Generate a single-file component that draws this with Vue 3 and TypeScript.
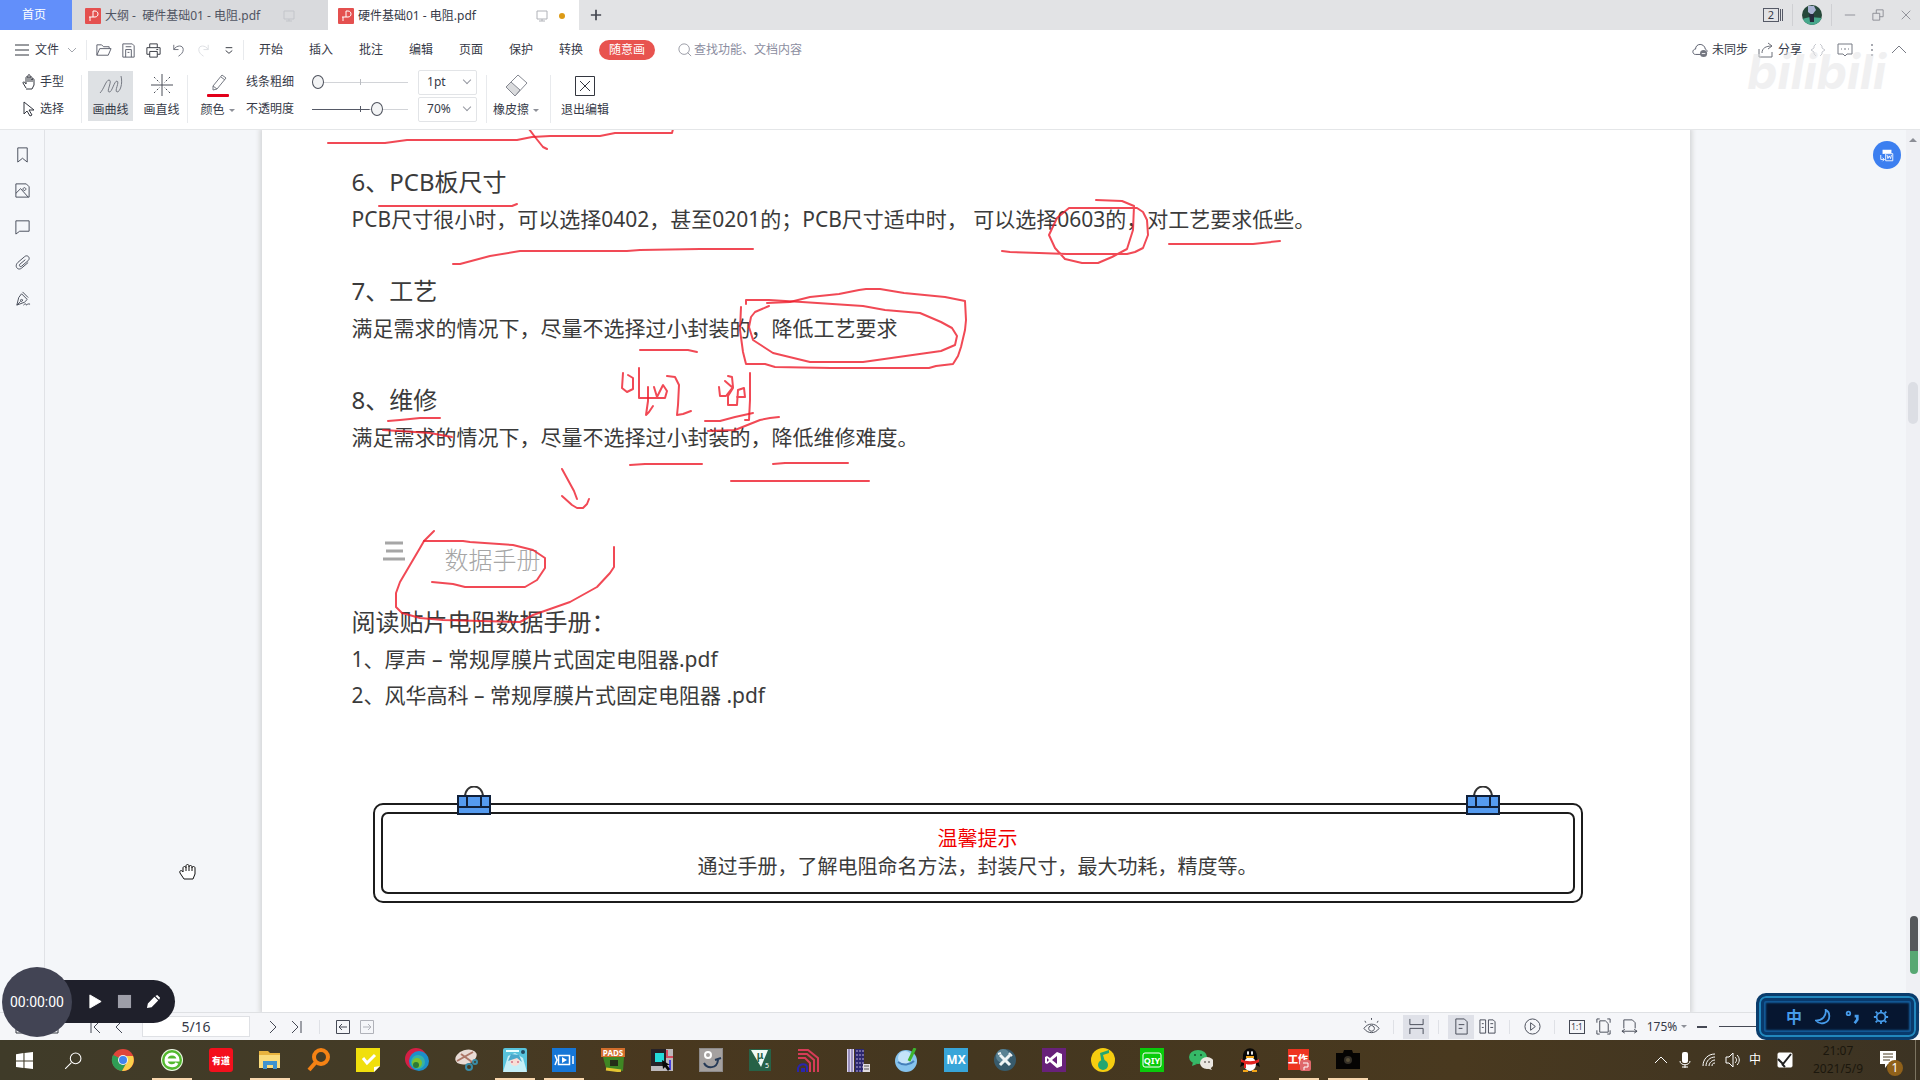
<script setup lang="ts">
import { ref } from 'vue'

interface TaskApp {
  name: string
  art: string
  active?: boolean
}

const thickness = ref('1pt')
const opacity = ref('70%')
const thicknessLevel = ref(0)
const opacityLevel = ref(70)
const pageLabel = ref('5/16')

const menus = ['开始', '插入', '批注', '编辑', '页面', '保护', '转换']

const quickIcons = [
  { name: '打开', color: '#5b5f6b', d: 'M2 14V3h5l2 2h6v2M2 14l3-7h12l-3 7z' },
  { name: '保存', color: '#5b5f6b', d: 'M3 2h10l2 2v12H3zM6 16V8h6v8M6 5h6M8 11h2' },
  { name: '打印', color: '#33363f', d: 'M5 6V2h8v4M5 13H2V6h14v7h-3M5 10h8v6H5zM12 8h2' },
  { name: '撤销', color: '#6b6f7a', d: 'M4 3v5h5M4 8c3-5 10-5 10 0 0 3-2 5-5 7' },
  { name: '恢复', color: '#dcdee2', d: 'M14 3v5H9M14 8C11 3 4 3 4 8c0 3 2 5 5 7' },
  { name: '自定义', color: '#33363f', d: 'M6 6h7M6 9l3.500 3 3.500-3' },
]

const sideIcons = [
  { name: '书签', d: 'M4 2h10v15l-5-4-5 4z' },
  { name: '缩略图', d: 'M2 2h11l3 3v11H2zM2 12l5-5 8 9M11 6a1.500 1.500 0 1 0 .1 0' },
  { name: '批注', d: 'M2 3h14v11H6l-4 3z' },
  { name: '附件', d: 'M12 6l-6 5c-1 2 1 3 2 2l7-6c3-3-1-7-4-4L4 9c-4 4 0 9 4 6l7-6' },
  { name: '签名', d: 'M9 2l6 6M8 4l6 6-3 3-8 3 2-8zM3 16l4-4M8 10a1 1 0 1 0 .1 0M10 16c3-3 3 0 3 0s2-2 4-1' },
]

const strokes = [
  'M328 143H385L407 140H517L532 137 550 136H600L615 133H672L673 129',
  'M529 129L535 137 543 147 547 149',
  'M379 206H512L517 204',
  'M453 264H460L490 256 520 251H627L640 250 700 249H753',
  'M640 350H688L697 352',
  'M741 307L740 330 743 352 746 364H765L775 367 831 368H929L936 366 953 364 958 356 961 347 965 330 966 320 965 301 945 297 904 293 880 289H866L859 290 839 294 810 297 790 302 767 303',
  'M746 304V300H769L802 302 863 306 885 310 920 313 941 322 952 328 957 336 955 345 941 351 863 362H810L773 353 753 340 749 327 751 317 755 312 769 306',
  'M1002 251L1010 252 1039 253 1067 254H1127L1135 252 1143 248 1148 235 1147 220 1143 212 1137 208H1069L1057 218 1049 235 1055 248 1065 259 1082 263H1098L1112 257 1127 249 1133 230 1134 206 1122 201 1096 200',
  'M1169 244H1253L1280 241',
  'M623 373L622 388 627 392 633 389V378L628 375',
  'M639 368V398H665L667 391 663 385 657 397 654 387',
  'M648 387V401L646 415 649 412 653 406',
  'M667 376L675 377 679 385 678 405 677 415 683 414 691 411',
  'M719 387L720 396 726 396 733 387 732 377 728 376M725 381L733 388 728 396 728 405H737L738 390 744 388 745 397 737 397',
  'M750 373V400L749 420 745 420',
  'M705 421H720L735 417 753 413',
  'M708 431L735 430 760 420 770 418 779 417',
  'M388 421L400 420 420 418H440',
  'M383 430L430 433 452 437',
  'M630 465L645 464H702',
  'M773 464L785 463H848M731 481H869',
  'M562 469L574 491 577 499M562 496L572 505 577 508H583L587 504 589 499',
  'M434 531L424 541 420 548 410 565 400 582 396 593V607L402 613 420 618 443 620 520 622 533 615 570 602 597 587 610 573 614 567V547',
  'M424 541H463L470 542 513 545 533 550 545 558V568L537 580 525 587H465L453 584 432 582',
]

const apps: TaskApp[] = [
  { name: 'Chrome', art: '<circle cx="12" cy="12" r="11" fill="#e0453a"/><path d="M2 7a11 11 0 0 0 9 16l5-9-4-2z" fill="#2f9e55"/><path d="M2 7l6 7 4-2z" fill="#2f9e55"/><path d="M22 8H12l4 6-5 9a11 11 0 0 0 11-15z" fill="#fbd04b"/><circle cx="12" cy="12" r="5" fill="#f3f3f3"/><circle cx="12" cy="12" r="4" fill="#4384ee"/>' },
  { name: '360浏览器', active: true, art: '<circle cx="12" cy="12" r="11" fill="#eef9e6"/><circle cx="12" cy="12" r="10" fill="#53b82e"/><path d="M6 12h12c0-8-12-8-12 0 0 7 9 7 11 3" fill="none" stroke="#fff" stroke-width="3"/>' },
  { name: '有道', art: '<rect width="24" height="24" rx="3" fill="#f3101d"/><text x="12" y="16" font-size="9" font-weight="900" text-anchor="middle" fill="#fff">有道</text>' },
  { name: '文件资源管理器', active: true, art: '<path d="M1 3h9l2 2h10v15H1z" fill="#e9b43f"/><path d="M1 7h21v13H1z" fill="#fbdc7c"/><path d="M5 21v-8h14v8h-4v-4H9v4z" fill="#3f93cf"/>' },
  { name: 'Everything', art: '<circle cx="14" cy="9" r="7" fill="none" stroke="#f58214" stroke-width="4"/><path d="M9 14l-7 8" stroke="#f58214" stroke-width="4"/>' },
  { name: '便签', art: '<path d="M0 0h24v18l-6 6H0z" fill="#f0df0c"/><path d="M24 18l-6 6v-5z" fill="#fff"/><path d="M7 10l4 5 8-8" fill="none" stroke="#fff" stroke-width="3"/>' },
  { name: '浏览器', art: '<circle cx="11" cy="11" r="11" fill="#d41f45"/><circle cx="14" cy="13" r="10" fill="#1c8fca"/><circle cx="13" cy="14" r="7" fill="#35b3a6"/><circle cx="12" cy="15" r="5" fill="#7dc02f"/><circle cx="11" cy="17" r="3" fill="#2d7a35"/>' },
  { name: '截图工具', art: '<ellipse cx="12" cy="9" rx="11" ry="7" transform="rotate(-18 12 9)" fill="#e9dcd6"/><path d="M3 13l16-9M7 6l11 8" stroke="#ad7768" stroke-width="2"/><circle cx="15" cy="19" r="3" fill="none" stroke="#398ba6" stroke-width="2"/><circle cx="21" cy="14" r="2" fill="none" stroke="#398ba6" stroke-width="2"/>' },
  { name: '动漫助手', active: true, art: '<rect width="24" height="24" rx="2" fill="#58c3dc"/><path d="M0 24L5 8l7-3 8 5 4 14z" fill="#c6eff7"/><circle cx="12" cy="13" r="5" fill="#f8ded6"/><path d="M5 13l3-7 8 1 3 7-5-4z" fill="#4aa9cc"/><path d="M9 13v2M15 13v2" stroke="#c13d5e"/><path d="M3 3h13" stroke="#e9ffff" stroke-width="2"/><circle cx="20" cy="4" r="2" fill="#234b63"/>' },
  { name: '录屏', active: true, art: '<rect width="24" height="24" fill="#1676d6"/><path d="M6.500 7.500h11v9h-11zM3 7l2 5-2 5M21 8v8" fill="none" stroke="#fff" stroke-width="1.500"/><path d="M10 9l5 3-5 3z" fill="#fff"/>' },
  { name: 'PADS', art: '<rect width="24" height="9" fill="#d36e2c"/><text x="12" y="8" font-size="8" font-weight="700" text-anchor="middle" fill="#fff">PADS</text><path d="M2 9h21l-1 14-17-3z" fill="#3f8624"/><path d="M9 12h8v6H9z" fill="#242d18"/><path d="M5 21l15 2" stroke="#e4c431" stroke-width="3"/>' },
  { name: 'PADS Layout', art: '<rect x="1" y="1" width="22" height="22" fill="#bdb9bd"/><path d="M1 1h15v17H1z" fill="#252127"/><rect x="5" y="5" width="9" height="9" fill="#25dada"/><path d="M17 2v7h6" fill="none" stroke="#d64b61" stroke-width="2"/><path d="M20 12v10" stroke="#463ee0" stroke-width="2"/><path d="M12 12l1 9 2-2 3 4 2-2-3-4h3z" fill="#080808"/>' },
  { name: 'PADS Router', art: '<rect width="24" height="24" fill="#8d8a8a"/><rect x="1" y="1" width="22" height="22" fill="#a5a1a0"/><circle cx="9" cy="7" r="3" fill="none" stroke="#fff" stroke-width="2"/><path d="M5 15c3 6 13 6 14-3M16 12l6-2" fill="none" stroke="#263a57" stroke-width="2"/>' },
  { name: 'Keil', art: '<rect x="1" y="1" width="22" height="22" fill="#276247"/><path d="M3 2h17l-7 17z" fill="#f1faf4"/><text x="12" y="11" font-size="10" font-weight="700" text-anchor="middle" fill="#276247">μ</text><text x="17" y="20" font-size="7" fill="#fff">5</text>' },
  { name: '布线', art: '<path d="M1 2h10l10 8v14M1 6h9l7 6v12M1 10h7l5 5v9" fill="none" stroke="#d73c58" stroke-width="2"/><path d="M1 24v-4c2-5 9-5 9 0v4M5 24v-3h2v3" fill="none" stroke="#2925ad" stroke-width="2"/>' },
  { name: '楼宇', art: '<rect x="1" y="1" width="7" height="23" fill="#ddd6ed"/><path d="M3 1v23M6 1v23" stroke="#584c8f"/><rect x="9" y="1" width="9" height="23" fill="#2c2770"/><path d="M11 2v22M14 2v22M17 2v22" stroke="#b8acd5" stroke-dasharray="2 2"/><rect x="17" y="16" width="7" height="8" fill="#e2dde0"/><path d="M18 18h5M18 21h5" stroke="#555"/>' },
  { name: '绘图', art: '<circle cx="11" cy="13" r="11" fill="#86c3ed"/><circle cx="10" cy="10" r="7" fill="#c4e4f9"/><path d="M3 14c5 4 12 3 16-1" fill="none" stroke="#447fba" stroke-width="2"/><path d="M20 0l-6 13" stroke="#3db52d" stroke-width="3"/>' },
  { name: 'MX', art: '<rect width="24" height="24" fill="#38a5d9"/><text x="12" y="16" font-size="12" font-weight="700" text-anchor="middle" fill="#fff">MX</text>' },
  { name: '工具', art: '<circle cx="12" cy="12" r="11" fill="#385b6c"/><circle cx="10" cy="8" r="7" fill="#5a8293"/><path d="M7 7l10 10M17 7L7 17" stroke="#eff4f5" stroke-width="3"/><path d="M5 6l3-1M16 5l3 3" stroke="#eff4f5" stroke-width="2"/>' },
  { name: 'Visual Studio', art: '<rect width="24" height="24" fill="#68217a"/><path d="M15 4l5 2v12l-5 2-7-6-3 2-2-1V9l2-1 3 2z" fill="#fff"/><path d="M15 8v8l-5-4zM5 10v4l2-2z" fill="#68217a"/>' },
  { name: 'QQ音乐', art: '<circle cx="12" cy="12" r="12" fill="#f6cd10"/><path d="M11 17L9 5l9-3v3l-6 2 3 10" fill="#24a671"/><circle cx="12" cy="17" r="5" fill="#24a671"/>' },
  { name: '爱奇艺', art: '<rect width="24" height="24" fill="#0acb0b"/><rect x="3" y="5" width="18" height="14" rx="2" fill="none" stroke="#fff" stroke-width="1"/><text x="12" y="16" font-size="9" font-weight="700" text-anchor="middle" fill="#fff">QIY</text>' },
  { name: '微信', art: '<ellipse cx="9" cy="9" rx="9" ry="7" fill="#36b967"/><path d="M4 14l-1 4 5-2z" fill="#36b967"/><circle cx="6" cy="7" r="1" fill="#174f2c"/><circle cx="12" cy="7" r="1" fill="#174f2c"/><ellipse cx="18" cy="15" rx="7" ry="6" fill="#ebe7e1"/><path d="M21 19l2 3-6-2z" fill="#ebe7e1"/><circle cx="16" cy="14" r="1" fill="#77716b"/><circle cx="20" cy="14" r="1" fill="#77716b"/>' },
  { name: 'QQ', art: '<path d="M5 10C4-3 20-3 19 10l3 9-4-2-6 4-6-4-4 2z" fill="#070707"/><ellipse cx="12" cy="16" rx="6" ry="7" fill="#fff"/><path d="M3 11c5 3 13 3 18 0v3c-5 3-11 3-13 2v4H6v-5l-3-1z" fill="#e12420"/><ellipse cx="10" cy="5" rx="1" ry="2" fill="#fff"/><ellipse cx="14" cy="5" rx="1" ry="2" fill="#fff"/><path d="M8 9h8M5 23h5M14 23h5" stroke="#f2a417" stroke-width="2"/>' },
  { name: '工作', active: true, art: '<rect x="1" y="1" width="21" height="21" fill="#ee3420"/><text x="11" y="15" font-size="10" font-weight="900" text-anchor="middle" fill="#fff">工作</text><rect x="13" y="12" width="11" height="11" rx="2" fill="#df686c"/><path d="M16 15h5v4h-4v3" fill="none" stroke="#fff"/>' },
  { name: '相机', active: true, art: '<path d="M0 5h7l1-3h8l1 3h7v16H0z" fill="#050403"/><circle cx="12" cy="12" r="4" fill="#353027"/><circle cx="12" cy="12" r="2" fill="#5a5139"/>' },
]
</script>

<template>
  <div class="desktop">
    <header class="titlebar">
      <button class="home">首页</button>
      <div class="tab">
        <svg class="pdf" viewBox="0 0 16 16"><rect width="16" height="16" rx="1" fill="#e4504f" /><path d="M4 9h4V3h2c4 0 4 6 0 6H8M5 9v4" fill="none" stroke="#fff" stroke-width="1" /></svg>
        <span class="name">大纲 -&nbsp; 硬件基础01 - 电阻.pdf</span>
        <svg class="screen faint" viewBox="0 0 14 14"><path d="M2 2h10v8H2zM7 10v2M4 12h6" /></svg>
      </div>
      <div class="tab current">
        <svg class="pdf" viewBox="0 0 16 16"><rect width="16" height="16" rx="1" fill="#e4504f" /><path d="M4 9h4V3h2c4 0 4 6 0 6H8M5 9v4" fill="none" stroke="#fff" stroke-width="1" /></svg>
        <span class="name">硬件基础01 - 电阻.pdf</span>
        <svg class="screen" viewBox="0 0 14 14"><path d="M2 2h10v8H2zM7 10v2M4 12h6" /></svg>
        <i class="unsaved"></i>
      </div>
      <button class="plus" aria-label="新建标签"><svg viewBox="0 0 14 14"><path d="M7 1v12M1 7h12" stroke="#454851" stroke-width="2" /></svg></button>
      <div class="window-tools">
        <button class="count" aria-label="窗口"><span>2</span><i></i><i></i></button>
        <i class="bar"></i>
        <svg class="avatar" viewBox="0 0 20 20"><clipPath id="face"><circle cx="10" cy="10" r="10" /></clipPath><g clip-path="url(#face)"><path fill="#26483a" d="M0 0h20v20H0z" /><path fill="#47a88c" d="M0 14l8-2 12 1v7H0z" /><path fill="#a9b3d3" d="M6 1h6l2 4-4 5-4-3z" /><path fill="#262a3c" d="M7 9h5v8H8z" /></g></svg>
        <i class="bar last"></i>
        <button class="win" aria-label="最小化"><svg viewBox="0 0 14 14"><path d="M1 7h12" /></svg></button>
        <button class="win" aria-label="还原"><svg viewBox="0 0 14 14"><path d="M1 5h8v8H1zM5 5V1h8v8H9" /></svg></button>
        <button class="win" aria-label="关闭"><svg viewBox="0 0 14 14"><path d="M2 2l10 10M12 2L2 12" /></svg></button>
      </div>
    </header>

    <nav class="menubar">
      <button class="file"><svg viewBox="0 0 14 12"><path d="M0 1h14M0 6h14M0 11h14" stroke="#33363f" /></svg>文件<svg class="chev" viewBox="0 0 10 10"><path d="M1 3l4 4 4-4" fill="none" stroke="#a3a6ad" /></svg></button>
      <i class="bar"></i>
      <div class="quick">
        <button v-for="icon in quickIcons" :key="icon.name" :aria-label="icon.name"><svg viewBox="0 0 18 18"><path :d="icon.d" fill="none" :stroke="icon.color" /></svg></button>
      </div>
      <i class="bar"></i>
      <button v-for="item in menus" :key="item" class="menu">{{ item }}</button>
      <button class="draw">随意画</button>
      <label class="search">
        <svg viewBox="0 0 16 16"><circle cx="7" cy="7" r="6" /><path d="M11 11l4 4" /></svg>
        <input type="text" placeholder="查找功能、文档内容" aria-label="查找功能、文档内容" />
      </label>
      <div class="share">
        <button class="sync"><svg viewBox="0 0 18 16"><path d="M10 13H4C0 13 0 7 4 7c0-7 10-7 11 0 2 1 2 2 2 3" fill="none" stroke="#4c5060" /><circle cx="13" cy="12" r="4" fill="#73767f" /><path d="M11 12h4" stroke="#fff" /></svg>未同步</button>
        <button class="send"><svg viewBox="0 0 16 16"><path d="M1 7v8h13v-5M4 11c0-5 4-7 10-7M10 1l4 3-4 3" fill="none" stroke="#6d707a" /></svg>分享</button>
        <button class="tiny" aria-label="代码"><svg viewBox="0 0 16 16"><path d="M6 2L4 4v2L1 8l3 2v2l2 2M10 2l2 2v2l3 2-3 2v2l-2 2" stroke="#c8cad0" fill="none" /></svg></button>
        <button class="tiny" aria-label="评论"><svg viewBox="0 0 16 16"><path d="M1 2h14v10h-5l-2 2-2-2H1zM4 7h1M7 7h2M11 7h1" stroke="#777a84" fill="none" /></svg></button>
        <button class="tiny" aria-label="更多"><svg viewBox="0 0 16 16"><path d="M8 2v2M8 7v2M8 12v2" stroke="#a7a9b0" stroke-width="2" /></svg></button>
        <button class="tiny" aria-label="收起"><svg viewBox="0 0 16 16"><path d="M1 11l7-7 7 7" stroke="#777a84" fill="none" /></svg></button>
      </div>
    </nav>

    <section class="toolbar">
      <div class="stack modes">
        <button><svg viewBox="0 0 14 16"><path d="M4 14L1 9c0-2 2-1 3 1V4c0-2 2-2 2 0V2c0-2 2-2 2 0v2c0-2 2-2 2 0v2c0-2 2-2 2 0v5l-2 4H4M6 4v4M8 4v4M10 5v3" fill="none" stroke="#33363f" /></svg>手型</button>
        <button><svg viewBox="0 0 14 16"><path d="M2 1v12l3-3 3 5 2-1-3-5h5z" fill="none" stroke="#33363f" /></svg>选择</button>
      </div>
      <i class="bar"></i>
      <button class="tool pressed"><svg viewBox="0 0 28 28"><path d="M3 22c4-4 6-13 9-13 4 0-3 12 0 12 3 1 5-11 8-11 3 1-3 10 0 11 3 0 6-8 4-16" fill="none" stroke="#777b84" /></svg>画曲线</button>
      <button class="tool"><svg viewBox="0 0 28 28"><path d="M14 3v22M3 14h22" stroke="#4a4e58" /><path d="M6 6l6 6M22 6l-6 6M6 22l6-6M22 22l-6-6" stroke="#4a4e58" stroke-dasharray="2 2" /></svg>画直线</button>
      <i class="bar"></i>
      <button class="tool color"><svg viewBox="0 0 28 28"><path d="M9 15l9-11 4 3-9 11-4 1zM9 15l4 3M17 6l4 3" fill="none" stroke="#777b84" /><rect x="3" y="23" width="22" height="3" rx="1" fill="#e2001a" /></svg><span>颜色<i class="caret"></i></span></button>
      <div class="stack sliders">
        <label>线条粗细<input v-model="thicknessLevel" type="range" min="0" max="100" /></label>
        <label class="used">不透明度<input v-model="opacityLevel" type="range" min="0" max="100" /></label>
      </div>
      <div class="stack picks">
        <span><select v-model="thickness" aria-label="线条粗细值"><option>1pt</option></select></span>
        <span><select v-model="opacity" aria-label="不透明度值"><option>70%</option></select></span>
      </div>
      <i class="bar"></i>
      <button class="tool eraser"><svg viewBox="0 0 28 28"><path d="M4 16L16 4l9 8-12 13z" fill="#fff" stroke="#858891" /><path d="M4 16l5-5 9 8-5 6z" fill="#dadbdd" stroke="#858891" /></svg><span>橡皮擦<i class="caret"></i></span></button>
      <i class="bar"></i>
      <button class="tool exit"><svg viewBox="0 0 28 28"><path d="M4.500 5.500h19v19h-19zM9 10l10 10M19 10L9 20" fill="none" stroke="#33363f" /></svg>退出编辑</button>
    </section>

    <div class="watermark" aria-hidden="true">bilibili</div>

    <main class="workspace">
      <aside class="side">
        <button v-for="icon in sideIcons" :key="icon.name" :aria-label="icon.name"><svg viewBox="0 0 18 18"><path :d="icon.d" fill="none" stroke="#454a57" /></svg></button>
      </aside>
      <div class="canvas">
        <article class="page">
          <section>
            <h2>6、PCB板尺寸</h2>
            <p>PCB尺寸很小时，可以选择0402，甚至0201的；PCB尺寸适中时， 可以选择0603的，对工艺要求低些。</p>
          </section>
          <section>
            <h2>7、工艺</h2>
            <p>满足需求的情况下，尽量不选择过小封装的，降低工艺要求</p>
          </section>
          <section>
            <h2>8、维修</h2>
            <p>满足需求的情况下，尽量不选择过小封装的，降低维修难度。</p>
          </section>
          <h3><svg viewBox="0 0 22 20"><path d="M2 2h18M3 10h17M0 18h22" stroke="#a6a6a6" stroke-width="3" /></svg>数据手册</h3>
          <section>
            <h2>阅读贴片电阻数据手册：</h2>
            <p>1、厚声 – 常规厚膜片式固定电阻器.pdf</p>
            <p>2、风华高科 – 常规厚膜片式固定电阻器 .pdf</p>
          </section>
          <div class="notice">
            <svg v-for="n in 2" :key="n" class="clip" viewBox="0 0 34 30"><path d="M8 11c0-14 18-14 18 0" fill="none" stroke="#333" stroke-width="2" /><path d="M1 10h32v18H1zM1 21h32M10 10v11M24 10v11" fill="#559bf0" stroke="#10203a" stroke-width="2" /></svg>
            <div class="notice-body">
              <strong>温馨提示</strong>
              <span>通过手册，了解电阻命名方法，封装尺寸，最大功耗，精度等。</span>
            </div>
          </div>
          <svg class="ink" width="1428" height="882" viewBox="262 130 1428 882"><path v-for="(d, i) in strokes" :key="i" :d="d" /></svg>
        </article>
        <button class="convert" aria-label="转换"><svg viewBox="0 0 18 18"><path d="M4 8V3h10v4" fill="#fff" /><path d="M7.500 7.500h8v8h-8z" fill="#3c7ff0" stroke="#fff" /><path d="M9 9l1 4 1.500-3 1.500 3 1-4M2 9v5h4M4 12l2 2-2 2" fill="none" stroke="#fff" /></svg></button>
        <svg class="grab" viewBox="0 0 20 20"><path d="M6 17l-4-6c-1-3 2-3 3-1V6c0-2 3-2 3 0V4c0-2 3-2 3 0v1c0-2 3-2 3 0v1c0-2 3-2 3 0v6l-2 5zM8 6v3M11 5v4M14 6v3" fill="#fff" stroke="#111" /></svg>
      </div>
      <div class="scroll"><i class="up"></i><i class="thumb"></i><i class="gauge"></i></div>
    </main>

    <footer class="status">
      <div class="pager">
        <svg class="panel" viewBox="0 0 44 14"><path d="M1 0v13h42V0" fill="none" stroke="#33363f" /></svg>
        <button aria-label="第一页"><svg viewBox="0 0 14 14"><path d="M2 1v12M11 1L5 7l6 6" /></svg></button>
        <button aria-label="上一页"><svg viewBox="0 0 14 14"><path d="M9 1L3 7l6 6" /></svg></button>
        <input v-model="pageLabel" type="text" aria-label="页码" />
        <button aria-label="下一页"><svg viewBox="0 0 14 14"><path d="M5 1l6 6-6 6" /></svg></button>
        <button aria-label="最后一页"><svg viewBox="0 0 14 14"><path d="M3 1l6 6-6 6M12 1v12" /></svg></button>
        <i class="bar"></i>
        <button aria-label="后退"><svg viewBox="0 0 14 14"><path d="M.5.5h13v13H.5zM11 7H3M6 4L3 7l3 3" /></svg></button>
        <button class="off" aria-label="前进"><svg viewBox="0 0 14 14"><path d="M.5.5h13v13H.5zM3 7h8M8 4l3 3-3 3" /></svg></button>
      </div>
      <div class="views">
        <button aria-label="护眼"><svg viewBox="0 0 18 18"><path d="M1 11c4-6 12-6 16 0-4 6-12 6-16 0zM9 2V0M3 5L2 3M15 5l1-2M9 8a3 3 0 1 0 .1 0" /></svg></button>
        <i class="bar"></i>
        <button class="on" aria-label="连续"><svg viewBox="0 0 18 18"><path d="M2 1v6h14V1M2 17v-6h14v6" /></svg></button>
        <i class="bar"></i>
        <button class="on" aria-label="单页"><svg viewBox="0 0 18 18"><path d="M3 1h9l3 3v13H3zM6 7h6M6 11h4" /></svg></button>
        <button aria-label="双页"><svg viewBox="0 0 18 18"><path d="M1 2h6v14H1zM10 2h5l2 2v12h-7zM3 6h2M3 10h2M12 6h3M12 10h3" /></svg></button>
        <i class="bar"></i>
        <button aria-label="播放"><svg viewBox="0 0 18 18"><circle cx="9" cy="9" r="8" /><path d="M7 5l5 4-5 4z" /></svg></button>
        <i class="bar"></i>
        <button class="ratio"><span>1:1</span></button>
        <button aria-label="适合页面"><svg viewBox="0 0 18 18"><path d="M5 3h6l3 3v9H5zM2 5V1h3M13 1h3v4M2 13v4h3M13 17h3v-4" /></svg></button>
        <button aria-label="适合宽度"><svg viewBox="0 0 18 18"><path d="M3 11V2h9l3 3v6M1 14h16M4 12l-3 2 3 2M14 12l3 2-3 2" /></svg></button>
        <button class="zoom">175%<i class="caret"></i></button>
        <button class="minus" aria-label="缩小"><svg viewBox="0 0 12 12"><path d="M1 6h10" stroke-width="2" /></svg></button>
        <i class="zoom-line"></i>
      </div>
    </footer>

    <div class="recorder">
      <span class="time">00:00:00</span>
      <button aria-label="播放"><svg viewBox="0 0 16 16"><path d="M2 1l12 7-12 7z" fill="#fff" stroke="#fff" /></svg></button>
      <button aria-label="停止"><svg viewBox="0 0 16 16"><path d="M1 1h14v14H1z" fill="#9d9ea8" /></svg></button>
      <button aria-label="画笔"><svg viewBox="0 0 16 16"><path d="M1 15l1-5 7-7 4 4-7 7zM10 2l2-1 3 3-1 2z" fill="#fff" /></svg></button>
    </div>

    <div class="ime">
      <span>中</span>
      <svg viewBox="0 0 18 18"><path d="M12 1c1 7-4 12-11 12 5 6 16 3 15-6 0-3-2-5-4-6z" fill="none" stroke="#469bea" stroke-width="2" /></svg>
      <svg viewBox="0 0 18 18"><circle cx="5" cy="5" r="2" fill="none" stroke="#469bea" stroke-width="2" /><path d="M12 8h3v4l-3 4" fill="none" stroke="#469bea" stroke-width="3" /></svg>
      <svg viewBox="0 0 18 18"><circle cx="9" cy="9" r="5" fill="none" stroke="#469bea" stroke-width="2" /><path d="M9 1v3M9 14v3M1 9h3M14 9h3M3 3l2 2M13 13l2 2M3 15l2-2M13 5l2-2" stroke="#469bea" stroke-width="2" /></svg>
    </div>

    <div class="taskbar">
      <button class="sys" aria-label="开始"><svg viewBox="0 0 16 16"><path d="M0 2l7-1v7H0zM8 1l8-1v8H8zM0 9h7v6l-7-1zM8 9h8v7l-8-1z" fill="#fff" /></svg></button>
      <button class="sys" aria-label="搜索"><svg viewBox="0 0 16 16"><circle cx="10" cy="6" r="5" fill="none" stroke="#fff" /><path d="M6 10l-6 6" stroke="#fff" /></svg></button>
      <div class="apps">
        <button v-for="app in apps" :key="app.name" :class="{ active: app.active }" :aria-label="app.name"><svg viewBox="0 0 24 24" v-html="app.art"></svg></button>
      </div>
      <div class="tray">
        <svg viewBox="0 0 16 16"><path d="M2 11l6-6 6 6" /></svg>
        <svg viewBox="0 0 16 16"><rect x="5" y="0" width="6" height="11" rx="2" fill="#fff" stroke="none" /><path d="M3 9c0 5 10 5 10 0M8 13v3M5 15h6" /></svg>
        <svg viewBox="0 0 16 16"><path d="M2 14C2 7 7 2 14 2M5 14c0-5 4-9 9-9M8 14c0-3 3-6 6-6M11 14c0-2 1-3 3-3" /></svg>
        <svg viewBox="0 0 16 16"><path d="M1 5h3l4-4v14l-4-4H1zM10 5c2 2 2 4 0 6M12 3c3 3 3 7 0 10" /></svg>
        <span class="lang">中</span>
        <svg class="pen" viewBox="0 0 16 16"><rect x="1" y="1" width="14" height="14" rx="1" fill="#fff" /><path d="M1 7l5 5 8-10M5 12l3 3" stroke="#222" stroke-width="2" /></svg>
        <div class="clock"><span>21:07</span><span>2021/5/9</span></div>
        <button class="news" aria-label="通知"><svg viewBox="0 0 20 20"><path d="M1 1h16v13H9l-3 4v-4H1z" fill="#fff" stroke="none" /><path d="M4 4h10M4 7h10M4 10h7" stroke="#4a3c22" /></svg><i>1</i></button>
      </div>
    </div>
  </div>
</template>

<style>
body {
  margin: 0;
  overflow: hidden;
}
</style>

<style scoped>
.desktop {
  position: relative;
  display: flex;
  flex-direction: column;
  height: 100vh;
  min-height: 600px;
  overflow: hidden;
  background: #fff;
  color: #363a48;
  font: 12px/18px 'Noto Sans', 'Noto Sans CJK SC', sans-serif;
}
button,
input,
select {
  margin: 0;
  padding: 0;
  border: 0;
  background: none;
  color: inherit;
  font: inherit;
}
button {
  display: flex;
  flex: none;
  align-items: center;
  justify-content: center;
}
svg {
  display: block;
  flex: none;
}
.bar {
  flex: none;
  width: 1px;
  background: #e8eaed;
}
.titlebar {
  display: flex;
  flex: none;
  height: 30px;
  background: #e2e3e5;
}
.home {
  width: 72px;
  padding-right: 4px;
  background: #628ffa;
  color: #fff;
}
.tab {
  display: flex;
  align-items: center;
  box-sizing: border-box;
  width: 256px;
  padding: 2px 32px 0 13px;
  background: #d9dadd;
  color: #505462;
}
.tab.current {
  width: 251px;
  padding: 2px 14px 0 10px;
  background: #fff;
  color: #363a48;
}
.pdf {
  width: 16px;
  height: 16px;
}
.name {
  flex: 1;
  margin-left: 4px;
  white-space: nowrap;
}
.screen {
  width: 14px;
  height: 14px;
  fill: none;
  stroke: #b0b2b8;
}
.screen.faint {
  stroke: #c3c5ca;
}
.unsaved {
  width: 6px;
  height: 6px;
  margin-left: 10px;
  border-radius: 50%;
  background: #dc9a15;
}
.plus {
  width: 34px;
}
.plus svg {
  width: 12px;
  height: 12px;
}
.window-tools {
  display: flex;
  align-items: center;
  margin-left: auto;
}
.window-tools .bar {
  height: 22px;
  margin: 0 9px;
  background: #cfd0d3;
}
.window-tools .last {
  margin-right: 4px;
}
.count {
  gap: 1px;
}
.count span {
  width: 14px;
  border: 1px solid #555966;
  font-size: 11px;
  line-height: 12px;
}
.count i {
  width: 1px;
  height: 12px;
  background: #555966;
}
.avatar {
  width: 20px;
  height: 20px;
}
.win {
  width: 28px;
  height: 30px;
}
.win svg {
  width: 12px;
  height: 12px;
  fill: none;
  stroke: #85878f;
}
.menubar {
  display: flex;
  flex: none;
  align-items: center;
  box-sizing: border-box;
  height: 38px;
  padding-top: 2px;
}
.menubar > .bar {
  height: 20px;
}
.file {
  box-sizing: border-box;
  width: 86px;
  padding-left: 6px;
  gap: 6px;
}
.file svg {
  width: 14px;
  height: 12px;
}
.file .chev {
  width: 10px;
  height: 10px;
  margin-left: 2px;
}
.quick {
  display: flex;
  padding: 0 2px 0 4px;
}
.quick button {
  width: 25px;
}
.quick svg {
  width: 17px;
  height: 17px;
}
.menu {
  width: 50px;
}
.quick + .bar {
  margin-right: 2px;
}
.draw {
  width: 56px;
  height: 20px;
  margin-left: 3px;
  border-radius: 10px;
  background: #e8534f;
  color: #fff;
}
.search {
  display: flex;
  flex: 1 1 160px;
  align-items: center;
  gap: 2px;
  margin-left: 23px;
}
.search svg {
  width: 14px;
  height: 14px;
  fill: none;
  stroke: #8f919b;
}
.search input {
  width: 140px;
  outline: 0;
}
.search input::placeholder {
  color: #8b8da0;
  opacity: 1;
}
.share {
  display: flex;
  align-items: center;
  padding-right: 8px;
}
.share svg {
  width: 16px;
  height: 16px;
}
.sync,
.send {
  gap: 4px;
}
.sync {
  margin-right: 10px;
}
.send {
  margin-right: 2px;
}
.tiny {
  width: 27px;
}
.toolbar {
  display: flex;
  flex: none;
  align-items: center;
  height: 61px;
  border-bottom: 1px solid #e4e6e8;
}
.toolbar > .bar {
  height: 48px;
}
.stack {
  display: flex;
  flex-direction: column;
  gap: 2px;
  margin-bottom: 6px;
}
.stack > * {
  height: 25px;
}
.modes {
  width: 81px;
}
.modes button {
  gap: 4px;
  margin-left: 5px;
}
.modes svg {
  width: 14px;
  height: 16px;
}
.tool {
  flex-direction: column;
  justify-content: flex-start;
  width: 45px;
  height: 50px;
  margin: 0 0 6px 6px;
  gap: 2px;
}
.tool svg {
  width: 28px;
  height: 28px;
}
.tool.pressed {
  background: #dee1e4;
}
.tool.pressed + .tool {
  margin-right: 3px;
}
.tool.color {
  margin-left: 7px;
}
.caret {
  display: inline-block;
  margin-left: 4px;
  border: 3px solid transparent;
  border-top-color: #8d9098;
  border-bottom: 0;
  vertical-align: middle;
}
.sliders {
  margin-left: 6px;
}
.sliders label {
  display: flex;
  align-items: center;
  gap: 18px;
}
.sliders input {
  width: 96px;
  height: 14px;
  appearance: none;
  background: linear-gradient(#b9bcc1, #b9bcc1) 50% 50% / 1px 6px no-repeat, linear-gradient(#d2d4d8, #d2d4d8) 50% 50% / 100% 1px no-repeat;
}
.sliders .used input {
  background: linear-gradient(#555966, #555966) 50% 50% / 1px 6px no-repeat, linear-gradient(#555966, #555966) 0 50% / 60% 1px no-repeat, linear-gradient(#d2d4d8, #d2d4d8) 50% 50% / 100% 1px no-repeat;
}
.sliders input::-webkit-slider-thumb {
  width: 12px;
  height: 14px;
  box-sizing: border-box;
  appearance: none;
  border: 1px solid #4d515c;
  border-radius: 50%;
  background: #f3f4f5;
}
.picks {
  margin: 0 9px 6px 10px;
}
.picks span {
  position: relative;
  display: block;
}
.picks span::after {
  position: absolute;
  top: 7px;
  right: 7px;
  width: 5px;
  height: 5px;
  border: solid #9699a1;
  border-width: 0 1px 1px 0;
  content: '';
  transform: rotate(45deg);
}
.picks select {
  box-sizing: border-box;
  width: 59px;
  height: 25px;
  padding-left: 8px;
  appearance: none;
  border: 1px solid #e2e4e7;
  border-radius: 2px;
  outline: 0;
}
.eraser {
  width: 50px;
  margin-right: 9px;
  margin-left: 4px;
}
.exit {
  width: 56px;
}
.watermark {
  position: absolute;
  top: 44px;
  right: 34px;
  color: #e2e2e4;
  opacity: 0.5;
  font: italic 700 48px/56px Inter, sans-serif;
  pointer-events: none;
}
.workspace {
  display: flex;
  flex: 1;
  min-height: 0;
  background: #f4f6f9;
}
.side {
  display: flex;
  flex: none;
  flex-direction: column;
  box-sizing: border-box;
  width: 45px;
  padding: 6px 0 0;
  border-right: 1px solid #e0e2e6;
  background: #f5f7fa;
}
.side button {
  height: 36px;
}
.side svg {
  width: 17px;
  height: 17px;
}
.canvas {
  position: relative;
  flex: 1;
  min-width: 0;
  overflow: hidden;
}
.page {
  position: relative;
  box-sizing: border-box;
  max-width: 1428px;
  min-height: 100%;
  margin: 0 auto;
  padding: 33px 90px 0;
  background: #fff;
  box-shadow: 0 0 5px 2px #d3d4d6;
  color: #3b3b3b;
}
.page section {
  margin-bottom: 35px;
}
h2,
h3,
p {
  margin: 0;
  font-weight: 400;
  white-space: nowrap;
}
h2,
h3 {
  font-size: 24px;
  line-height: 38px;
}
p {
  font-size: 21px;
  line-height: 36px;
}
h3 {
  display: flex;
  align-items: center;
  gap: 40px;
  margin: 86px 0 24px 31px;
  color: #a6a6a6;
  font-weight: 300;
}
h3 svg {
  width: 22px;
  height: 20px;
  margin-bottom: 18px;
}
.notice {
  position: relative;
  box-sizing: border-box;
  margin: 90px 17px 0 21px;
  padding: 7px 6px;
  border: 2px solid #1c1c1c;
  border-radius: 10px;
}
.notice-body {
  display: flex;
  flex-direction: column;
  align-items: center;
  padding: 11px 0;
  border: 2px solid #1c1c1c;
  border-radius: 7px;
  font-size: 20px;
  line-height: 28px;
}
.notice-body strong {
  color: #f00000;
  font-weight: 400;
}
.clip {
  position: absolute;
  top: -19px;
  left: 82px;
  width: 34px;
  height: 30px;
}
.clip:nth-of-type(2) {
  right: 81px;
  left: auto;
}
.ink {
  position: absolute;
  top: 0;
  left: 0;
  fill: none;
  stroke: #ed1c2b;
  stroke-linecap: round;
  stroke-linejoin: round;
  stroke-opacity: 0.8;
  stroke-width: 2;
  pointer-events: none;
}
.convert {
  position: absolute;
  top: 11px;
  right: 5px;
  width: 28px;
  height: 28px;
  border-radius: 50%;
  background: #3c7ff0;
}
.convert svg {
  width: 16px;
  height: 16px;
}
.grab {
  position: absolute;
  bottom: 130px;
  left: 133px;
  width: 20px;
  height: 20px;
}
.scroll {
  position: relative;
  flex: none;
  width: 14px;
  background: #eff0f4;
}
.up {
  position: absolute;
  top: 8px;
  left: 3px;
  border: 4px solid transparent;
  border-top: 0;
  border-bottom-color: #8b8e96;
}
.thumb {
  position: absolute;
  top: 252px;
  left: 2px;
  width: 10px;
  height: 42px;
  border-radius: 5px;
  background: #dcdee4;
}
.gauge {
  position: absolute;
  bottom: 38px;
  left: 4px;
  width: 8px;
  height: 58px;
  border-radius: 4px;
  background: linear-gradient(#55585c 60%, #57a873 60%);
}
.status {
  display: flex;
  flex: none;
  align-items: center;
  justify-content: space-between;
  box-sizing: border-box;
  height: 28px;
  border-top: 1px solid #dfe1e4;
  background: #f5f6f9;
}
.status svg {
  fill: none;
  stroke: #454955;
}
.status .bar {
  height: 14px;
  margin: 0 9px;
  background: #dfe1e6;
}
.pager,
.views {
  display: flex;
  align-items: center;
}
.pager .panel {
  width: 44px;
  height: 14px;
  margin: 0 25px 0 15px;
}
.pager .bar {
  margin: 0 11px;
}
.pager button {
  width: 24px;
}
.pager button svg {
  width: 14px;
  height: 14px;
}
.pager input {
  box-sizing: border-box;
  width: 108px;
  height: 21px;
  margin: 0 10px;
  border: 1px solid #dfe1e5;
  background: #fff;
  font-size: 14px;
  text-align: center;
}
.pager .off svg {
  stroke: #b0b2b9;
}
.views {
  padding-right: 164px;
}
.views button {
  width: 26px;
  height: 24px;
}
.views button svg {
  width: 17px;
  height: 17px;
}
.views .on {
  background: #dfe1e8;
}
.ratio span {
  width: 14px;
  border: 1px solid #454955;
  font-size: 8px;
  line-height: 12px;
}
.views .zoom {
  width: 44px;
  margin-left: 3px;
}
.views .minus svg {
  width: 12px;
  height: 12px;
}
.zoom-line {
  width: 37px;
  height: 1px;
  margin-left: 4px;
  background: #454955;
}
.recorder {
  position: absolute;
  bottom: 57px;
  left: 37px;
  display: flex;
  align-items: center;
  height: 43px;
  padding: 0 7px 0 44px;
  border-radius: 0 22px 22px 0;
  background: #1f202b;
}
.recorder .time {
  position: absolute;
  left: -35px;
  width: 70px;
  height: 70px;
  border-radius: 50%;
  background: #424454;
  color: #fff;
  font: 14px/70px Roboto, sans-serif;
  text-align: center;
}
.recorder button {
  width: 29px;
}
.recorder svg {
  width: 15px;
  height: 15px;
}
.ime {
  position: absolute;
  right: 1px;
  bottom: 40px;
  display: flex;
  align-items: center;
  justify-content: space-evenly;
  box-sizing: border-box;
  width: 163px;
  height: 47px;
  padding: 0 14px;
  border: 3px solid #0a3c6c;
  border-radius: 10px;
  background: #061630;
  box-shadow: inset 0 0 0 2px #2187bd, inset 0 0 0 5px #093a6c, inset 0 0 2px 7px #135c9a;
  color: #469bea;
  font-size: 16px;
  font-weight: 700;
}
.ime svg {
  width: 16px;
  height: 16px;
}
.taskbar {
  display: flex;
  flex: none;
  height: 40px;
  background: linear-gradient(90deg, #3f3b29, #453b25 24%, #49381f 34%, #443720 50%, #49391f 76%, #3c3323);
}
.sys {
  width: 49px;
}
.sys svg {
  width: 17px;
  height: 17px;
}
.apps {
  display: flex;
  flex: 1;
  min-width: 0;
  overflow: hidden;
}
.apps button {
  position: relative;
  width: 49px;
}
.apps svg {
  width: 24px;
  height: 24px;
}
.apps .active::after {
  position: absolute;
  right: 4px;
  bottom: 0;
  left: 5px;
  height: 2px;
  background: #f8d7ae;
  content: '';
}
.tray {
  display: flex;
  align-items: center;
  gap: 8px;
  margin-right: 4px;
  padding-right: 12px;
  border-right: 1px solid #7c7461;
}
.tray svg {
  width: 16px;
  height: 16px;
  fill: none;
  stroke: #fff;
}
.lang {
  color: #fff;
}
.tray .pen {
  margin: 0 8px;
}
.clock {
  display: flex;
  flex-direction: column;
  align-items: center;
  width: 58px;
  color: #1b170d;
}
.tray .news {
  position: relative;
  width: 28px;
  height: 40px;
}
.tray .news svg {
  width: 20px;
  height: 20px;
}
.news i {
  position: absolute;
  right: 0;
  bottom: 4px;
  width: 16px;
  height: 16px;
  border-radius: 50%;
  background: #90611a;
  color: #fff;
  font-style: normal;
  line-height: 16px;
}
</style>
